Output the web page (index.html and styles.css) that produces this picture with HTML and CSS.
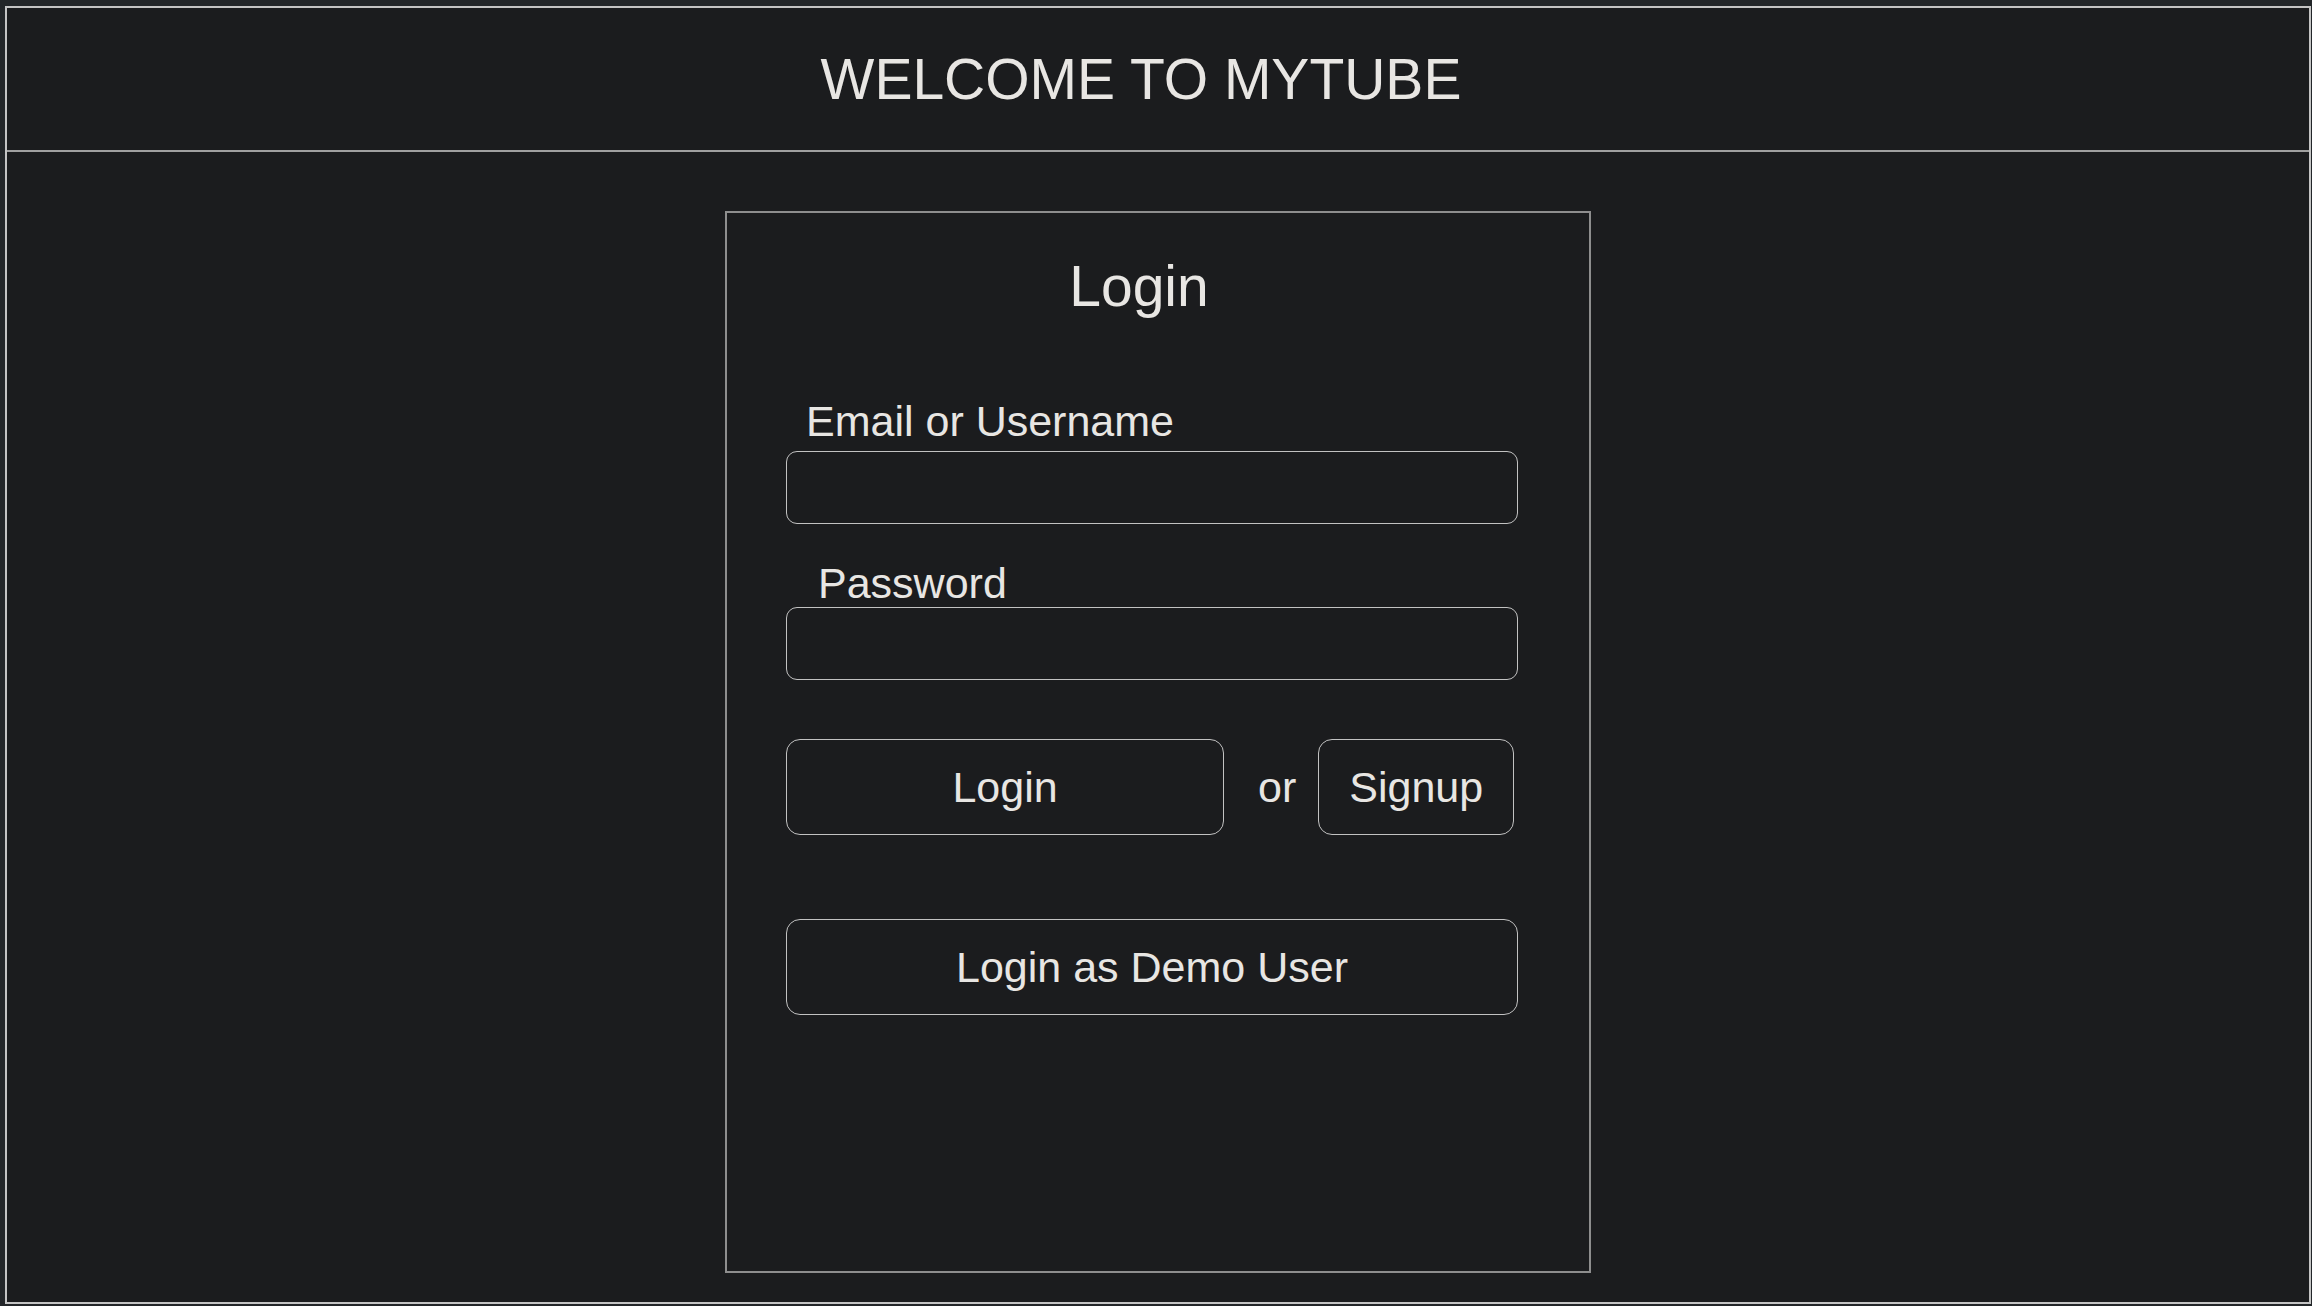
FILE: index.html
```html
<!DOCTYPE html>
<html lang="en">
<head>
<meta charset="utf-8">
<title>MyTube - Login</title>
<link rel="stylesheet" href="styles.css">
</head>
<body>
<div class="frame">
  <header class="topbar">
    <h1 class="site-title">WELCOME TO MYTUBE</h1>
  </header>
  <main class="main">
    <form class="login-card" onsubmit="return false;">
      <h2 class="card-title">Login</h2>
      <label class="field-label label-email" for="email">Email or Username</label>
      <input class="field-input" id="email" type="text">
      <label class="field-label label-password" for="password">Password</label>
      <input class="field-input" id="password" type="password">
      <div class="action-row">
        <button class="btn btn-login" type="submit">Login</button>
        <span class="or-text">or</span>
        <button class="btn btn-signup" type="button">Signup</button>
      </div>
      <button class="btn btn-demo" type="button">Login as Demo User</button>
    </form>
  </main>
</div>
</body>
</html>
```

FILE: styles.css
```css
html {
  background: #232629;
  height: 100%;
}

body {
  margin: 6px 1px 2px 5px;
  font-family: "Liberation Sans", Arial, sans-serif;
  color: #e8e6e3;
}

.frame {
  box-sizing: border-box;
  height: 1298px;
  border: 2px solid #c4c4c4;
  background: #1b1c1e;
  display: flex;
  flex-direction: column;
}

.topbar {
  height: 142px;
  border-bottom: 2px solid #a0a0a0;
  display: flex;
  align-items: center;
  justify-content: center;
  padding-right: 34px;
}

.site-title {
  margin: 0;
  font-size: 57px;
  font-weight: 400;
  line-height: 66px;
}

.main {
  flex: 1;
  display: flex;
  justify-content: center;
  align-items: flex-start;
  padding-top: 59px;
}

.login-card {
  box-sizing: border-box;
  width: 866px;
  height: 1062px;
  border: 2px solid #8e8e8e;
  padding: 0 71px 0 59px;
  display: flex;
  flex-direction: column;
}

.card-title {
  margin: 40px 0 0;
  padding-right: 26px;
  text-align: center;
  font-size: 57px;
  font-weight: 400;
  line-height: 66px;
}

.field-label {
  display: block;
  font-size: 43px;
  line-height: 48px;
}

.label-email {
  margin: 78px 0 0 20px;
}

.label-password {
  margin: 35px 0 0 32px;
}

.field-input {
  box-sizing: border-box;
  width: 100%;
  height: 73px;
  margin: 0;
  border: 1px solid #c2c2c2;
  border-radius: 11px;
  background: transparent;
  color: #e8e6e3;
  font-family: inherit;
  font-size: 40px;
  padding: 0 16px;
  outline: none;
}

#email {
  margin-top: 6px;
}

.action-row {
  margin-top: 59px;
  display: flex;
  align-items: center;
}

.btn {
  box-sizing: border-box;
  height: 96px;
  border: 1px solid #c2c2c2;
  border-radius: 14px;
  background: transparent;
  color: #e8e6e3;
  font-family: inherit;
  font-size: 43px;
  line-height: 49px;
  padding: 0;
  cursor: pointer;
}

.btn-login {
  width: 438px;
}

.or-text {
  font-size: 43px;
  margin: 0 22px 0 34px;
}

.btn-signup {
  padding: 0 30px;
}

.btn-demo {
  margin-top: 84px;
  width: 100%;
}
```
